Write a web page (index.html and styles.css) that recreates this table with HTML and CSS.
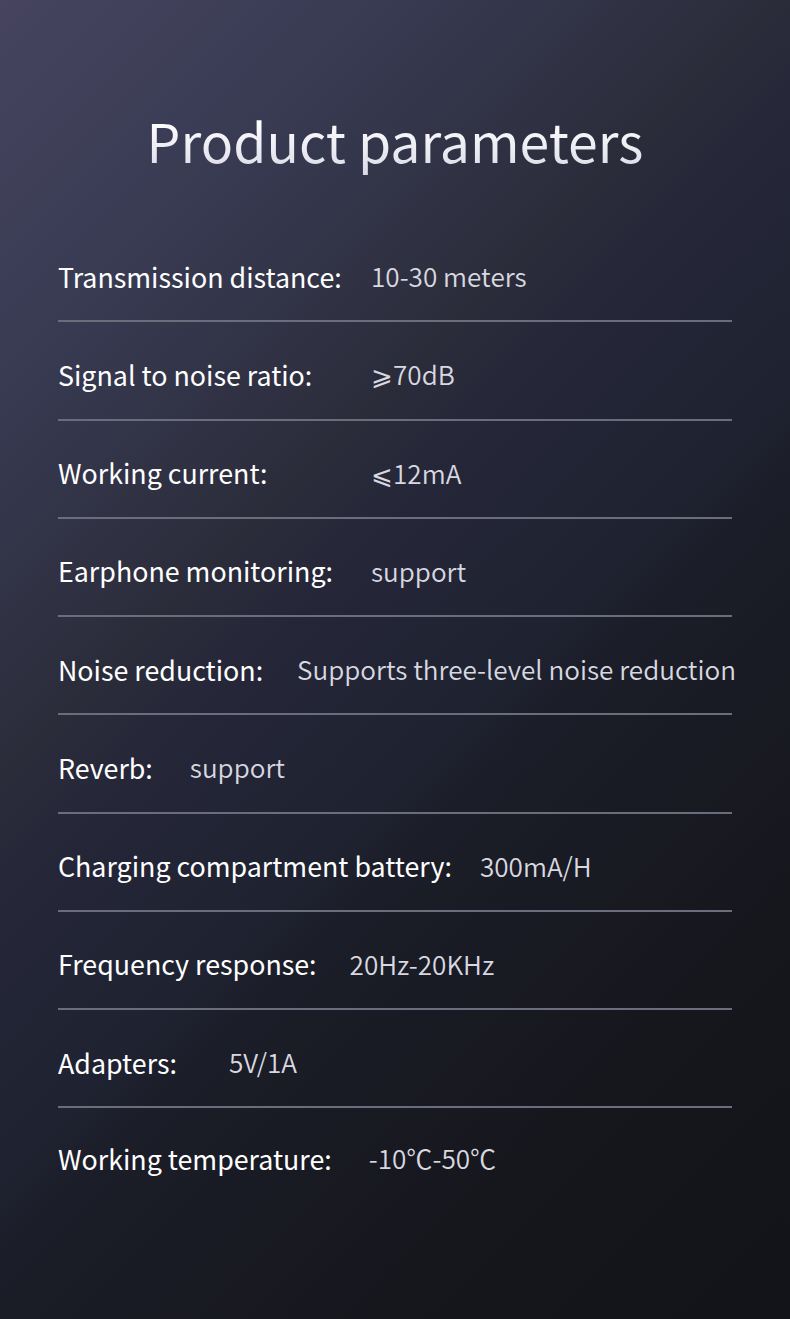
FILE: index.html
```html
<!DOCTYPE html>
<html lang="en">
<head>
<meta charset="utf-8">
<title>Product parameters</title>
<link rel="stylesheet" href="styles.css">
</head>
<body>
<main class="page">
  <h1 class="title">Product parameters</h1>
  <ul class="params">
    <li class="row fixed"><span class="label">Transmission distance:</span><span class="value">10-30 meters</span></li>
    <li class="row fixed"><span class="label">Signal to noise ratio:</span><span class="value">⩾70dB</span></li>
    <li class="row fixed"><span class="label">Working current:</span><span class="value">⩽12mA</span></li>
    <li class="row fixed"><span class="label">Earphone monitoring:</span><span class="value">support</span></li>
    <li class="row g34"><span class="label">Noise reduction:</span><span class="value">Supports three-level noise reduction</span></li>
    <li class="row g37"><span class="label">Reverb:</span><span class="value">support</span></li>
    <li class="row g28"><span class="label">Charging compartment battery:</span><span class="value">300mA/H</span></li>
    <li class="row g33"><span class="label">Frequency response:</span><span class="value">20Hz-20KHz</span></li>
    <li class="row g52"><span class="label">Adapters:</span><span class="value">5V/1A</span></li>
    <li class="row g37 last"><span class="label">Working temperature:</span><span class="value">-10℃-50℃</span></li>
  </ul>
</main>
</body>
</html>
```

FILE: styles.css
```css
html, body {
  margin: 0;
  padding: 0;
}
body {
  width: 790px;
  height: 1319px;
  overflow: hidden;
  background: linear-gradient(135deg, #46445f 0%, #383a52 19%, #2b2c3a 37%, #252739 43%, #1f2230 56%, #1b1d28 60%, #16171d 80%, #131419 100%);
  font-family: "Noto Sans CJK SC", "Noto Sans", sans-serif;
}
.page {
  padding: 100px 0 0 0;
}
.title {
  margin: 0;
  text-align: center;
  font-size: 53.6px;
  line-height: 80px;
  font-weight: 400;
  background: linear-gradient(180deg, #ffffff 25%, #d6d6e4 100%);
  -webkit-background-clip: text;
  background-clip: text;
  color: transparent;
}
.params {
  list-style: none;
  margin: 44px 0 0 58px;
  padding: 0;
  width: 674px;
}
.row {
  display: flex;
  align-items: center;
  padding: 32px 0 24.25px 0;
  height: 40px;
  border-bottom: 2px solid #6b6c7c;
  white-space: nowrap;
}
.row.last {
  border-bottom: none;
  padding-top: 30px;
}
.label {
  font-size: 26.8px;
  font-weight: 400;
  color: #ffffff;
}
.value {
  font-size: 26.1px;
  font-weight: 350;
  color: #d8d8e0;
}
.fixed .label { width: 313px; }
.g28 .value { margin-left: 28px; }
.g33 .value { margin-left: 33px; }
.g34 .value { margin-left: 34px; }
.g37 .value { margin-left: 37px; }
.g52 .value { margin-left: 52px; }
```
